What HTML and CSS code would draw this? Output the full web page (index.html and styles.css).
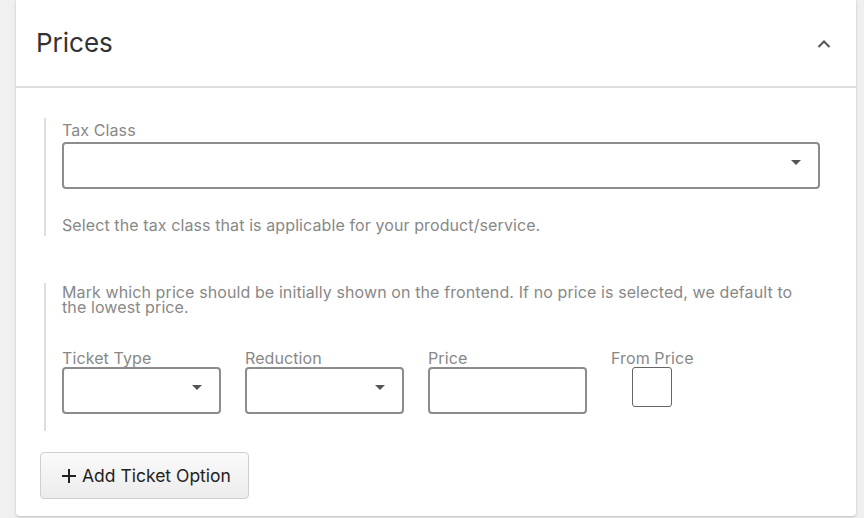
FILE: index.html
```html
<!DOCTYPE html>
<html>
<head>
<meta charset="utf-8">
<link rel="stylesheet" href="styles.css">
</head>
<body>
<div class="page">
  <div class="card">
    <div class="card-header">
      <h2 class="title">Prices</h2>
      <svg class="chevron" width="14" height="10" viewBox="0 0 14 10"><path d="M1.5 8 L7 2.5 L12.5 8" fill="none" stroke="#555" stroke-width="2"/></svg>
    </div>
    <div class="card-body">
      <div class="group group-tax">
        <label class="label">Tax Class</label>
        <div class="select wide"><span class="caret"></span></div>
        <p class="help">Select the tax class that is applicable for your product/service.</p>
      </div>
      <div class="group group-tickets">
        <p class="help tight">Mark which price should be initially shown on the frontend. If no price is selected, we default to the lowest price.</p>
        <div class="ticket-row">
          <div class="field">
            <label class="label tight">Ticket Type</label>
            <div class="select small"><span class="caret"></span></div>
          </div>
          <div class="field">
            <label class="label tight">Reduction</label>
            <div class="select small"><span class="caret"></span></div>
          </div>
          <div class="field">
            <label class="label tight">Price</label>
            <div class="select small"></div>
          </div>
          <div class="field center">
            <label class="label tight">From Price</label>
            <div class="checkbox"></div>
          </div>
        </div>
      </div>
      <button class="btn"><svg width="14" height="14" viewBox="0 0 14 14"><path d="M7 0 V14 M0 7 H14" stroke="#222" stroke-width="2"/></svg>Add Ticket Option</button>
    </div>
  </div>
</div>
</body>
</html>
```
FILE: styles.css
```css
html, body {
  margin: 0;
  padding: 0;
  background: #f0f0f0;
  font-family: Inter, "Noto Sans", sans-serif;
}
.page {
  width: 864px;
  height: 518px;
  padding: 0 0 0 16px;
  box-sizing: border-box;
  overflow: hidden;
}
.card {
  width: 840px;
  background: #fff;
  border-radius: 0 0 4px 4px;
  box-shadow: 0 1px 3px rgba(0,0,0,0.22);
}
.card-header {
  height: 86px;
  border-bottom: 2px solid #dddddd;
  display: flex;
  align-items: center;
  justify-content: space-between;
  padding: 0 25px 0 20px;
}
.title {
  margin: 0 0 2px 0;
  font-size: 26px;
  font-weight: 400;
  color: #333;
}
.chevron {
  display: block;
  margin-top: 1px;
}
.card-body {
  padding: 30px 36px 17px 25px;
}
.group {
  margin-left: 3px;
  border-left: 2px solid #dddddd;
  padding-left: 16px;
}
.group-tax {
  padding-top: 3px;
  padding-bottom: 2px;
}
.group-tickets {
  margin-top: 47px;
  padding-top: 2px;
  padding-bottom: 17px;
  margin-bottom: 21px;
}
.label {
  display: block;
  font-size: 16px;
  letter-spacing: 0.1px;
  line-height: 18px;
  color: #888;
  margin-bottom: 3px;
}
.label.tight {
  line-height: 15px;
  margin-bottom: 1px;
}
.select {
  position: relative;
  height: 47px;
  box-sizing: border-box;
  border: 2px solid #8c8c8c;
  border-radius: 4px;
}
.select.wide {
  width: 758px;
}
.select.small {
  width: 158.5px;
}
.caret {
  position: absolute;
  right: 17px;
  top: 16px;
  width: 0;
  height: 0;
  border-left: 5px solid transparent;
  border-right: 5px solid transparent;
  border-top: 5px solid #555;
}
.help {
  margin: 27px 0 0 0;
  font-size: 16px;
  letter-spacing: 0.1px;
  line-height: 18px;
  color: #888;
}
.help.tight {
  margin: 0;
  line-height: 15px;
  width: 740px;
}
.ticket-row {
  display: flex;
  gap: 24.5px;
  margin-top: 36px;
}
.field {
  display: flex;
  flex-direction: column;
}
.field.center {
  align-items: center;
}
.checkbox {
  width: 40px;
  height: 40px;
  box-sizing: border-box;
  border: 1px solid #666;
  border-radius: 3px;
}
.btn {
  display: flex;
  align-items: center;
  gap: 6px;
  height: 47px;
  width: 209px;
  padding: 0 0 0 21px;
  margin-left: -1px;
  border: 1px solid #cfcfcf;
  border-radius: 4px;
  background: linear-gradient(#fafafa, #ececec);
  font-family: Inter, "Noto Sans", sans-serif;
  font-size: 17.5px;
  color: #222;
  box-sizing: border-box;
}
```
